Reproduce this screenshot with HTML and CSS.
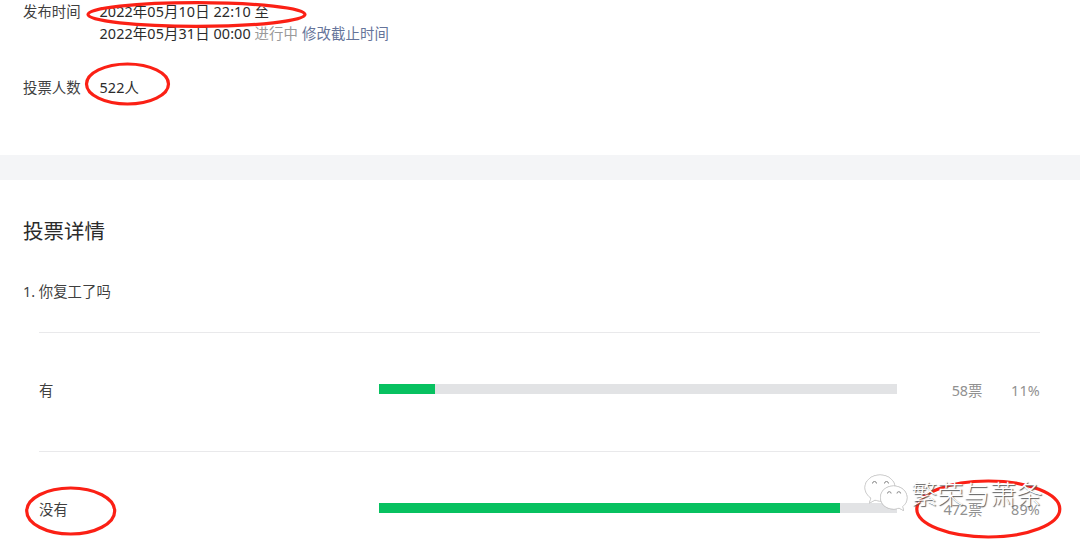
FILE: index.html
```html
<!DOCTYPE html>
<html lang="zh-CN">
  <head>
    <meta charset="UTF-8" />
    <meta name="viewport" content="width=device-width, initial-scale=1.0" />
    <title>投票详情</title>
    <link rel="stylesheet" href="styles.css">
  </head>
  <body>
    <div class="page">
      <div class="info">
        <div class="info-row">
          <span class="info-label">发布时间</span>
          <div class="info-value">
            <div>2022年05月10日 22:10 至</div>
            <div>
              2022年05月31日 00:00 <span class="status">进行中</span>
              <a class="link">修改截止时间</a>
            </div>
          </div>
        </div>
        <div class="info-row">
          <span class="info-label">投票人数</span>
          <div class="info-value">522人</div>
        </div>
      </div>

      <div class="detail">
        <h2 class="title">投票详情</h2>
        <p class="question">1. 你复工了吗</p>
        <div class="options">
          <div class="option">
            <span class="option-name">有</span>
            <div class="bar"><div class="bar-fill" style="width: 11%"></div></div>
            <span class="votes">58票</span>
            <span class="percent">11%</span>
          </div>
          <div class="option">
            <span class="option-name">没有</span>
            <div class="bar"><div class="bar-fill" style="width: 89%"></div></div>
            <span class="votes">472票</span>
            <span class="percent">89%</span>
          </div>
        </div>
      </div>

      <!-- red marker circles -->
      <svg class="marks" width="1080" height="542" viewBox="0 0 1080 542">
        <ellipse cx="196.5" cy="14.5" rx="108.5" ry="11.8" />
        <ellipse cx="127.5" cy="84" rx="41" ry="20" />
        <ellipse cx="70.7" cy="511" rx="44" ry="23" />
        <ellipse cx="988.3" cy="509" rx="71.5" ry="28" />
      </svg>

      <div class="watermark">
        <svg class="wechat" width="46" height="40" viewBox="0 0 46 40">
          <path class="bubble" d="M17 1C8.500 1 2 6.500 2 13.500C2 18 4.500 21.500 8 24L6.500 29L12 26C14 26.800 16 27 18 27C26 27 32 21 32 13.500C32 6.500 25.500 1 17 1Z" />
          <path class="bubble" d="M30.500 12C23 12 17.500 17 17.500 23.500C17.500 30 23 35 30.500 35C32.500 35 34 34.700 36 34L40.500 36.500L39.500 32.500C42.500 30.500 44 27.500 44 23.500C44 17 38 12 30.500 12Z" />
          <path class="eye" d="M9.500 9.500a2 2 0 0 1 4 0M21.500 9.500a2 2 0 0 1 4 0M24.500 19.500a1.800 1.800 0 0 1 3.600 0M34 19.500a1.800 1.800 0 0 1 3.600 0" />
        </svg>
        <span class="watermark-text">繁荣与萧条</span>
      </div>
    </div>
  </body>
</html>
```

FILE: styles.css
```css
body {
  margin: 0;
  background-color: #fff;
  color: #3f3f3f;
  font-family: "Noto Sans", "Noto Sans CJK SC", sans-serif;
  font-size: 14.4px;
  line-height: 22px;
}
.page {
  position: relative;
  height: 542px;
  overflow: hidden;
}
.info {
  height: 154px;
  padding: 1px 23px 0;
  box-sizing: border-box;
}
.info-row {
  display: flex;
  margin-bottom: 32px;
}
.info-label {
  width: 76.5px;
}
.info-value {
  color: #2b2b2b;
  letter-spacing: 0.1px;
}
.status {
  color: #9a9a9a;
}
.link {
  color: #65749a;
}
.detail {
  border-top: 25px solid #f4f5f7;
  margin-top: 1px;
  padding: 36px 40px 0 23px;
}
.title {
  margin: 0;
  font-size: 20.5px;
  font-weight: 400;
  line-height: 30px;
  color: #2b2b2b;
}
.question {
  margin: 35px 0 29px;
}
.options {
  margin-left: 16px;
}
.option {
  display: flex;
  align-items: center;
  height: 118px;
  padding-bottom: 1px;
  box-sizing: border-box;
  border-top: 1px solid #e9e9eb;
  margin-bottom: 1px;
}
.option-name {
  width: 339.5px;
}
.bar {
  width: 518px;
  height: 10px;
  margin-bottom: 4px;
  background-color: #e2e3e5;
}
.bar-fill {
  height: 100%;
  background-color: #07c160;
}
.votes {
  flex: 1;
  text-align: right;
  color: #919191;
}
.percent {
  width: 57.5px;
  text-align: right;
  letter-spacing: 0.2px;
  color: #919191;
}
.marks {
  position: absolute;
  top: 0;
  left: 0;
  fill: none;
  stroke: #fb2015;
  stroke-width: 3.2;
}
.watermark {
  position: absolute;
  top: 474px;
  left: 863px;
  display: flex;
  align-items: center;
}
.bubble {
  fill: #fff;
  stroke: #ddd;
  stroke-width: 0.6;
  filter: drop-shadow(0.6px 0.8px 0.3px #777);
}
.eye {
  fill: none;
  stroke: #888;
  stroke-width: 1;
}
.watermark-text {
  margin-left: 2px;
  font-size: 26.3px;
  font-weight: 300;
  line-height: 40px;
  color: #fff;
  text-shadow: 1px 1px 1px #555;
}
```
